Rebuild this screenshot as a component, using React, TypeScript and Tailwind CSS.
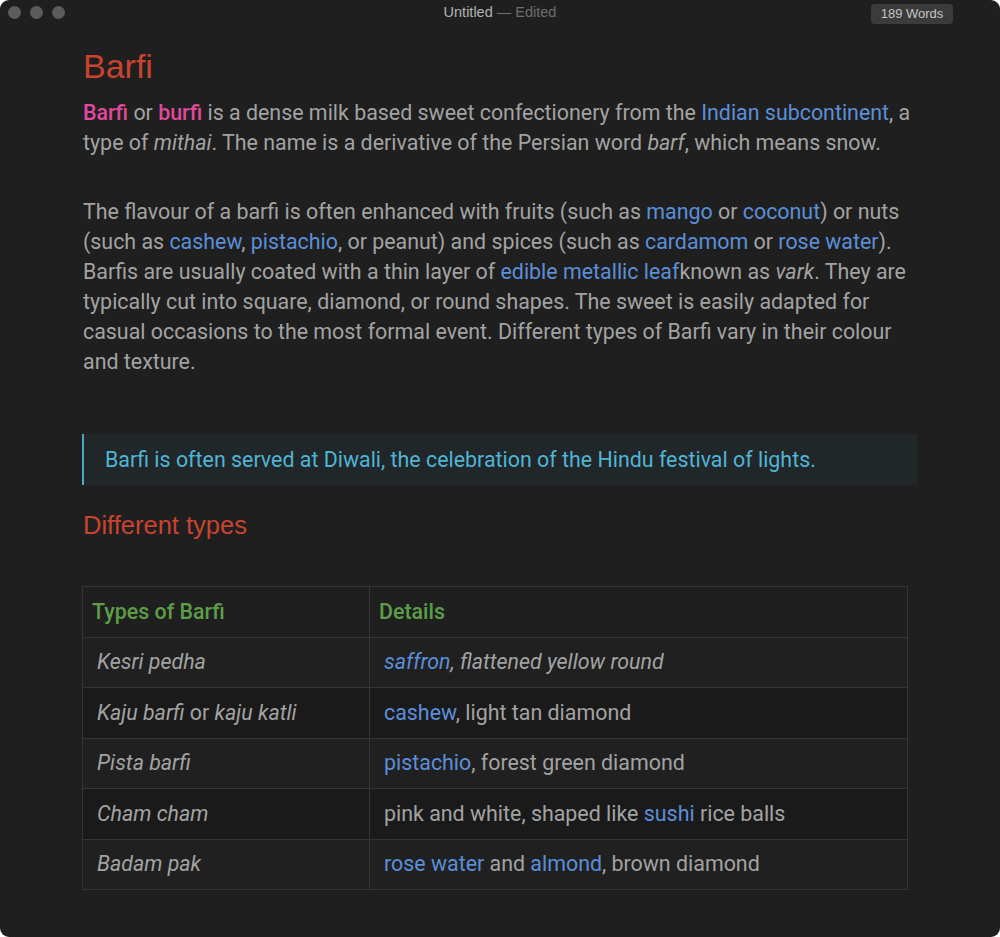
import React from "react"

const body = "font-['Roboto',sans-serif]"
const head = "font-['Liberation_Sans',Arial,sans-serif]"

function A({ children }: { children: React.ReactNode }) {
  return <span className="text-[#5b8fd9]">{children}</span>
}

interface Row {
  type: React.ReactNode
  details: React.ReactNode
  dark?: boolean
}

const rows: Row[] = [
  {
    type: <em>Kesri pedha</em>,
    details: (
      <em>
        <A>saffron</A>, flattened yellow round
      </em>
    ),
  },
  {
    type: (
      <>
        <em>Kaju barfi</em> or <em>kaju katli</em>
      </>
    ),
    details: (
      <>
        <A>cashew</A>, light tan diamond
      </>
    ),
    dark: true,
  },
  {
    type: <em>Pista barfi</em>,
    details: (
      <>
        <A>pistachio</A>, forest green diamond
      </>
    ),
  },
  {
    type: <em>Cham cham</em>,
    details: (
      <>
        pink and white, shaped like <A>sushi</A> rice balls
      </>
    ),
    dark: true,
  },
  {
    type: <em>Badam pak</em>,
    details: (
      <>
        <A>rose water</A> and <A>almond</A>, brown diamond
      </>
    ),
  },
]

export default function App() {
  return (
    <div className="min-h-screen bg-white">
      <div className="h-[937px] rounded-[9px] bg-[#1f1f1f] overflow-hidden">
        {/* title bar */}
        <div className="relative h-[24px] flex items-center">
          <div className="flex gap-[9px] pl-[8px]">
            <span className="w-[13px] h-[13px] rounded-full bg-[#5c5c5c]" />
            <span className="w-[13px] h-[13px] rounded-full bg-[#5c5c5c]" />
            <span className="w-[13px] h-[13px] rounded-full bg-[#5c5c5c]" />
          </div>
          <div className={`absolute inset-x-0 top-[3px] text-center text-[14.5px] leading-[18px] ${head}`}>
            <span className="text-[#b4b4b4]">Untitled</span>
            <span className="text-[#6e6e6e]"> — Edited</span>
          </div>
          <div
            className={`absolute left-[871px] top-[4px] w-[82px] h-[20px] rounded-[4px] bg-[#3b3b3b] text-[#c4c4c4] text-[13px] leading-[20px] text-center ${head}`}
          >
            189 Words
          </div>
        </div>

        {/* document */}
        <div className={`pl-[83px] pr-[83px] text-[21.4px] leading-[30px] text-[#a3a3a3] ${body}`}>
          <h1 className={`mt-[21px] text-[34px] leading-[42px] text-[#c9432f] ${head}`}>Barfi</h1>
          <p className="mt-[11px]">
            <b className="font-medium text-[#e04a9c]">Barfi</b> or{" "}
            <b className="font-medium text-[#e04a9c]">burfi</b> is a dense milk based sweet confectionery from the{" "}
            <A>Indian subcontinent</A>, a type of <em>mithai</em>. The name is a derivative of the Persian word{" "}
            <em>barf</em>, which means snow.
          </p>
          <p className="mt-[39px]">
            The flavour of a barfi is often enhanced with fruits (such as <A>mango</A> or <A>coconut</A>) or nuts (such
            as <A>cashew</A>, <A>pistachio</A>, or peanut) and spices (such as <A>cardamom</A> or <A>rose water</A>).
            Barfis are usually coated with a thin layer of <A>edible metallic leaf</A>known as <em>vark</em>. They are
            typically cut into square, diamond, or round shapes. The sweet is easily adapted for casual occasions to the
            most formal event. Different types of Barfi vary in their colour and texture.
          </p>

          <blockquote className="mt-[57px] -ml-[1px] border-l-2 border-[#4aa9c9] bg-[#212628] py-[10.5px] pl-[21px] text-[#4fb5d6]">
            Barfi is often served at Diwali, the celebration of the Hindu festival of lights.
          </blockquote>

          <h2 className={`mt-[25px] text-[25.5px] leading-[30px] text-[#c9432f] ${head}`}>Different types</h2>

          <table className="mt-[46px] -ml-[1px] w-[826px] border-collapse">
            <thead>
              <tr className="bg-[#1f1f1f]">
                <th className="w-[287px] border border-[#353535] pl-[9px] py-[9.75px] text-left font-medium text-[#5c9e48]">
                  Types of Barfi
                </th>
                <th className="border border-[#353535] pl-[9px] py-[9.75px] text-left font-medium text-[#5c9e48]">
                  Details
                </th>
              </tr>
            </thead>
            <tbody>
              {rows.map((row, i) => (
                <tr key={i} className={row.dark ? "bg-[#1a1a1a]" : "bg-[#202020]"}>
                  <td className="border border-[#353535] pl-[14px] py-[9.75px]">{row.type}</td>
                  <td className="border border-[#353535] pl-[14px] py-[9.75px]">{row.details}</td>
                </tr>
              ))}
            </tbody>
          </table>
        </div>
      </div>
    </div>
  )
}
